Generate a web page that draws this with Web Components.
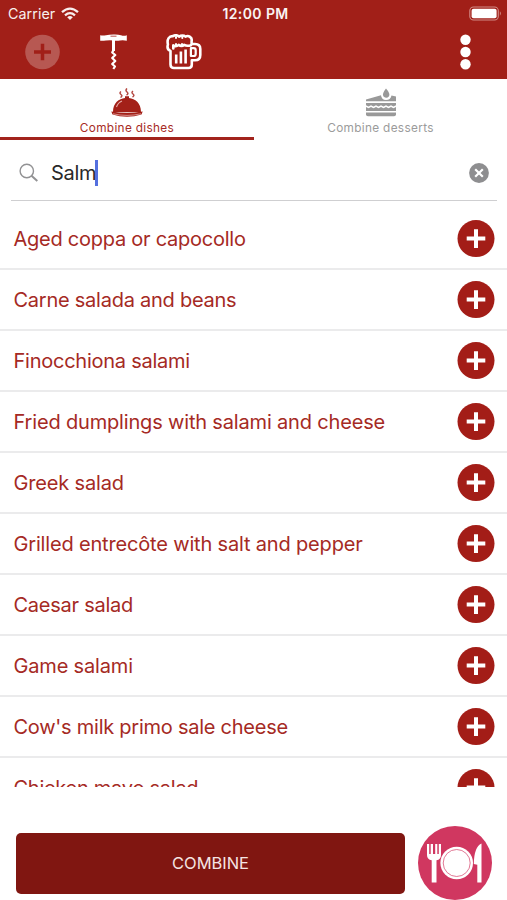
<!DOCTYPE html>
<html lang="en">
<head>
<meta charset="utf-8">
<title>Combine dishes</title>
<style>
html,body{margin:0;padding:0;background:#fff}
body{width:507px;height:900px;overflow:hidden;font-family:Inter,"Liberation Sans",sans-serif}
</style>
</head>
<body>
<food-app></food-app>
<script>
const define = (name, html) => customElements.define(name, class extends HTMLElement {
  constructor() {
    super();
    this.attachShadow({mode: 'open'}).innerHTML = html;
  }
});

define('status-bar', `
<style>
:host{display:grid;grid-template-columns:1fr auto 1fr;align-items:center;height:27px;padding:0 5px 0 8px;color:#fff;font-size:14.3px}
.left{display:flex;align-items:center;gap:6px;opacity:.93;letter-spacing:.05px}
.time{font-weight:600;font-size:14px;letter-spacing:.4px;opacity:.95;padding-left:1px}
.right{display:flex;justify-content:flex-end}
svg{display:block}
</style>
<div class="left"><span>Carrier</span>
<svg width="18" height="14" viewBox="0 0 18 14" fill="none" stroke="#fff" stroke-width="2.3"><path d="M1 5.2Q9-2 17 5.2"/><path d="M4 8.3Q9 4 14 8.3"/><path d="M6.2 10.2Q9 8 11.8 10.2L9 13z" fill="#fff" stroke="none"/></svg></div>
<span class="time">12:00 PM</span>
<div class="right"><svg width="33" height="15" viewBox="0 0 33 15"><rect x=".8" y="1" width="28.5" height="13" rx="3.8" fill="none" stroke="#d18b86" stroke-width="1.1"/><rect x="2.6" y="2.8" width="25" height="9.4" rx="2" fill="#fff"/><path d="M30.9 5.3q1.9 2.2 0 4.4z" fill="#d18b86"/></svg></div>`);

define('tool-bar', `
<style>
:host{display:flex;align-items:center;height:50px;padding:0 36px 0 25px}
svg{display:block}
.cork{margin-left:40px}.beer{margin-left:39px}.more{margin-left:auto}
</style>
<svg width="35" height="36" viewBox="0 0 35 36"><circle cx="17.5" cy="18" r="17.3" fill="#b75852"/><path d="M9 18h17M17.500 9.700v16.600" stroke="#a11f18" stroke-width="3.500"/></svg>
<svg class="cork" width="27" height="36" viewBox="0 0 27 36"><path d="M.2 1.300Q3 1.900 6 1.300T13.500.5T21 1.300T26.800 1.300V6.700Q23 5.900 20 6.500T13.500 6.500T6 6.500T.2 6.700z" fill="#fff"/><path d="M10.500 2.200h6" stroke="#b9534e" stroke-width="1"/><path d="M13.500 6V17" stroke="#fff" stroke-width="3"/><path d="M13.500 16L12.200 18.500L15.300 21L12.200 24L15.300 27L12.200 30L15 32.500L13.300 35" fill="none" stroke="#fff" stroke-width="2.200" stroke-linejoin="round"/></svg>
<svg class="beer" width="36" height="36" viewBox="0 0 36 36" fill="none" stroke="#fff" stroke-width="2.600" stroke-linejoin="round" stroke-linecap="round"><path d="M4.500 17C1.600 16 1.200 13 1.900 10.500C.7 5 3.300 1.800 7 2.100C9 1 11.500 1.200 13 2.600C15 1.200 18 1.200 19.500 2.600C22.500 1 26.500 3.500 25.600 7V10H29Q34.300 10 34.300 15V21Q34.300 26.300 29 26.300H25.800V30.500Q25.800 34 22.500 34H8Q4.500 34 4.500 30.500z"/><path d="M7.300 14.500V11.500M7.300 11.300Q10 13 12.600 10.900Q15.500 13 18.200 10.900Q21 12.500 25 11.200" /><path d="M10 3v1M16.300 3v1M10 10v1M16 10v1" stroke-width="2"/><path d="M24.900 14.200h2.800q2 0 2 2V20q0 2-2 2h-2.800z" stroke-width="2.200"/><path d="M10.200 20.500V29.500M14.900 17.500V29.500M19.600 15.500V29.500" stroke-width="2.600" stroke-linecap="butt"/></svg>
<svg class="more" width="11" height="36" viewBox="0 0 11 36" fill="#fff"><circle cx="5.500" cy="5.800" r="5.200"/><circle cx="5.500" cy="18" r="5.200"/><circle cx="5.500" cy="30.200" r="5.200"/></svg>`);

define('tab-item', `
<style>
:host{display:flex;flex-direction:column;align-items:center;box-sizing:border-box;height:61px;padding-top:9px;color:#9b9b9b;font-size:11.800px;letter-spacing:.33px;border-bottom:3px solid transparent}
:host([active]){color:#a72b25;border-bottom-color:#a2231c}
.label{line-height:16px;margin-top:2px;white-space:nowrap}
::slotted(svg){display:block}
</style>
<slot name="icon"></slot><span class="label"><slot></slot></span>`);

define('search-field', `
<style>
:host{display:flex;align-items:center;box-sizing:border-box;height:61px;margin:0 10px 0 11px;padding:5px 8px 0;border-bottom:1px solid #cfcfd1;color:#292929;font-size:20px}
.text{margin-left:12px;letter-spacing:-.3px;line-height:26px}
.caret{width:2.500px;height:26px;margin-left:-1px;background:#5470df}
.clear{margin-left:auto}
svg{display:block}
</style>
<svg width="20" height="20" viewBox="0 0 20 20" fill="none" stroke="#929294"><circle cx="7.800" cy="8" r="6.700" stroke-width="1.400"/><path d="M12.500 12.700L18.300 18" stroke-width="2"/></svg>
<span class="text"><slot></slot></span><span class="caret"></span>
<svg class="clear" width="20" height="20" viewBox="0 0 20 20"><circle cx="10" cy="10" r="9.900" fill="#8e8e90"/><path d="M6.200 6.200l7.600 7.600M13.800 6.200l-7.600 7.600" stroke="#fff" stroke-width="2.200"/></svg>`);

define('dish-row', `
<style>
:host{display:flex;align-items:center;justify-content:space-between;box-sizing:border-box;height:61.060px;padding:0 12px 0 13.500px;border-bottom:2px solid #ebebec;color:#a52a24;font-size:20px;letter-spacing:-.17px}
:host([tight]){letter-spacing:-.25px}
span{white-space:nowrap;padding-top:1px}
svg{display:block}
</style>
<span><slot></slot></span>
<svg width="38" height="38" viewBox="0 0 38 38"><circle cx="19" cy="18.600" r="18.500" fill="#a31d17"/><path d="M9.700 18.600h18.600M19 9.300v18.600" stroke="#fff" stroke-width="4"/></svg>`);

define('combine-bar', `
<style>
:host{display:flex;align-items:center;gap:13px;padding:39px 15px 0 16px}
button{width:389px;height:61px;border:0;border-radius:5px;background:#801611;color:#f5e4e3;font:400 16.500px Inter,"Liberation Sans",sans-serif;letter-spacing:-.05px;padding:0}
svg{display:block}
</style>
<button><slot></slot></button>
<svg width="74" height="74" viewBox="0 0 74 74"><circle cx="37" cy="37" r="37" fill="#d03760"/>
<circle cx="38.700" cy="37" r="16.300" fill="#fff"/><circle cx="38.700" cy="37" r="13.500" fill="none" stroke="#d9577a" stroke-width=".8"/>
<path d="M9 18V29Q9 33.500 13.700 34.300V56.500H18.500V34.300Q23 33.500 23 29V18H20.800V28H19.300V18H17.200V28H15V18H12.700V28H11.200V18z" fill="#fff"/>
<path d="M63.500 17.500V56.500H59.300V38.800L55.800 38Q56 21 63.500 17.500z" fill="#fff"/></svg>`);

define('food-app', `
<style>
:host{display:flex;flex-direction:column;width:507px;height:900px;background:#fff;overflow:hidden}
header{background:#a11f18;height:79px}
nav{display:grid;grid-template-columns:254px 253px}
main{height:586px;padding-top:8px;box-sizing:border-box;overflow:hidden}
</style>
<header><status-bar></status-bar><tool-bar></tool-bar></header>
<nav>
<tab-item active><svg slot="icon" width="34" height="30" viewBox="0 0 34 30"><path d="M3 24C3 15 9 10.500 15 10V8.300h4V10C25 10.500 31 15 31 24z" fill="#a32018"/><path d="M1.300 23.500Q17 26 32.700 23.500L31.500 26.500Q17 31 2.500 26.500z" fill="#a32018"/><path d="M3 25.800Q17 29 31 25.800" stroke="#e6aaa7" stroke-width=".8" fill="none"/><path d="M6.500 19Q8 14.500 12 13" stroke="#e6aaa7" stroke-width="1.100" fill="none"/><path d="M11 3.500q-2 1.500 0 3t-.5 3M17 .5q-2 1.800 0 3.500t-.5 3M23 3q-2 1.500 0 3t-.5 3" stroke="#b44842" stroke-width="1.500" fill="none"/></svg>Combine dishes</tab-item>
<tab-item><svg slot="icon" width="34" height="30" viewBox="0 0 34 30" fill="#999"><path d="M2 11.500L17 7.200Q17.500 12 22 12T27.500 7.500L32 8.500V13.300H2z"/><path d="M22 .5Q27 6 24.800 8.500T19.500 8.500Q17.500 6 22 .5z"/><path d="M2 15H32V17.300L29.500 18.600L27 17.300L24.500 18.600L22 17.300L19.500 18.600L17 17.300L14.500 18.600L12 17.300L9.500 18.600L7 17.300L4.500 18.600L2 17.300z"/><path d="M2 19L4.500 20.300L7 19L9.500 20.300L12 19L14.500 20.300L17 19L19.500 20.300L22 19L24.500 20.300L27 19L29.500 20.300L32 19V23H2z"/><path d="M2 24.600h30v1.700q0 2-2 2H4q-2 0-2-2z"/></svg>Combine desserts</tab-item>
</nav>
<search-field>Salm</search-field>
<main>
<dish-row tight>Aged coppa or capocollo</dish-row>
<dish-row tight>Carne salada and beans</dish-row>
<dish-row tight>Finocchiona salami</dish-row>
<dish-row>Fried dumplings with salami and cheese</dish-row>
<dish-row>Greek salad</dish-row>
<dish-row>Grilled entrecôte with salt and pepper</dish-row>
<dish-row tight>Caesar salad</dish-row>
<dish-row>Game salami</dish-row>
<dish-row tight>Cow's milk primo sale cheese</dish-row>
<dish-row tight>Chicken mayo salad</dish-row>
</main>
<combine-bar>COMBINE</combine-bar>`);
</script>
</body>
</html>
